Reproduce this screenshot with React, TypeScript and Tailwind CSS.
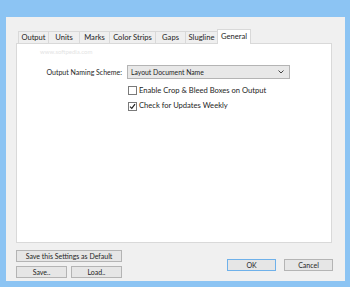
import React from "react";

const font = { fontFamily: 'Lato, "Noto Sans", sans-serif' };

function Tab({ label, w, active }: { label: string; w: string; active?: boolean }) {
  if (active) {
    return (
      <div
        className={`${w} h-[15px] -mx-[1px] -mb-px relative z-10 bg-white border border-[#d9d9d9] border-b-0 flex items-center justify-center text-[7.6px] text-[#1e1e1e]`}
      >
        {label}
      </div>
    );
  }
  return (
    <div
      className={`${w} h-[12px] bg-[#efefef] border border-[#d9d9d9] border-b-0 -ml-px first:ml-0 flex items-center justify-center text-[7.6px] text-[#1e1e1e]`}
    >
      {label}
    </div>
  );
}

function Btn({ label, w, def }: { label: string; w: string; def?: boolean }) {
  return (
    <div
      className={`${w} h-[12px] flex items-center justify-center text-[7px] text-[#1e1e1e] bg-[#e6e6e6] border ${
        def ? "border-[#6fb1ea]" : "border-[#b4b4b4]"
      }`}
    >
      {label}
    </div>
  );
}

function Check({ checked }: { checked?: boolean }) {
  return (
    <div className="w-[9px] h-[9px] border border-[#7a7a7a] bg-white flex items-center justify-center">
      {checked && (
        <svg width="7" height="7" viewBox="0 0 7 7">
          <path d="M1 3.6 L2.8 5.4 L6 1.2" fill="none" stroke="#222" strokeWidth="1.2" />
        </svg>
      )}
    </div>
  );
}

export default function App() {
  return (
    <div className="w-[350px] h-[287px] bg-[#8cc4f3] pt-[17px] pl-[6px] pr-[5px] pb-[6px]" style={font}>
      <div className="h-full bg-[#f0f0f0] flex flex-col pl-[10px] pr-[13px] pt-[12px]">
        <div className="flex items-end h-[14px] pl-[2px]">
          <Tab label="Output" w="w-[31px]" />
          <Tab label="Units" w="w-[32px]" />
          <Tab label="Marks" w="w-[31px]" />
          <Tab label="Color Strips" w="w-[47px]" />
          <Tab label="Gaps" w="w-[31px]" />
          <Tab label="Slugline" w="w-[33px]" />
          <Tab label="General" w="w-[34px]" active />
        </div>
        <div className="h-[200px] bg-white border border-[#d9d9d9] flex flex-col">
          <div className="pl-[23px] pt-[5px] text-[6px] text-[#e4e4e4] leading-none h-[13px]">www.softpedia.com</div>
          <div className="flex items-center mt-[8px]">
            <div className="w-[105px] text-right text-[7px] text-[#1e1e1e]">Output Naming Scheme:</div>
            <div className="ml-[5px] w-[163px] h-[14px] bg-[#e8e8e8] border border-[#b4b4b4] flex items-center justify-between pl-[3px] pr-[5px]">
              <span className="text-[6.8px] text-[#1e1e1e]">Layout Document Name</span>
              <svg width="6" height="4" viewBox="0 0 6 4">
                <path d="M0.5 0.5 L3 3 L5.5 0.5" fill="none" stroke="#444" strokeWidth="1" />
              </svg>
            </div>
          </div>
          <div className="flex items-center ml-[111px] mt-[6px] gap-[2px]">
            <Check />
            <span className="text-[7.6px] text-[#1e1e1e]">Enable Crop &amp; Bleed Boxes on Output</span>
          </div>
          <div className="flex items-center ml-[111px] mt-[4px] gap-[2px]">
            <Check checked />
            <span className="text-[7.6px] text-[#1e1e1e]">Check for Updates Weekly</span>
          </div>
        </div>
        <div className="flex justify-between mt-[7px]">
          <div className="flex flex-col gap-[4px]">
            <Btn label="Save this Settings as Default" w="w-[106px]" />
            <div className="flex justify-between">
              <Btn label="Save.." w="w-[51px]" />
              <Btn label="Load.." w="w-[51px]" />
            </div>
          </div>
          <div className="flex gap-[8px] mt-[9px] -mr-[1px]">
            <Btn label="OK" w="w-[49px]" def />
            <Btn label="Cancel" w="w-[49px]" />
          </div>
        </div>
      </div>
    </div>
  );
}
